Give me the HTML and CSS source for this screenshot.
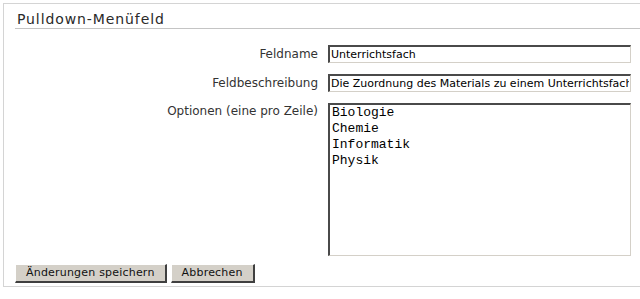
FILE: index.html
```html
<!DOCTYPE html>
<html lang="de">
<head>
  <meta charset="UTF-8" />
  <meta name="viewport" content="width=device-width, initial-scale=1.0" />
  <title>Pulldown-Menüfeld</title>
  <link rel="stylesheet" href="styles.css">
</head>
<body>
  <div class="panel">
    <h2>Pulldown-Menüfeld</h2>

    <form class="fields" onsubmit="return false">
      <label for="fname">Feldname</label>
      <input type="text" id="fname" value="Unterrichtsfach" />

      <label for="fdesc">Feldbeschreibung</label>
      <input type="text" id="fdesc" value="Die Zuordnung des Materials zu einem Unterrichtsfach" />

      <label for="fopts" class="top">Optionen (eine pro Zeile)</label>
      <textarea id="fopts">Biologie
Chemie
Informatik
Physik</textarea>
    </form>

    <div class="buttons">
      <button type="button">Änderungen speichern</button>
      <button type="button">Abbrechen</button>
    </div>
  </div>
</body>
</html>
```

FILE: styles.css
```css
body {
  font-family: "DejaVu Sans", Verdana, sans-serif;
  margin: 0;
  background: #fff;
  color: #333;
  overflow: hidden;
}

.panel {
  margin: 3px 0 0 3px;
  border: 1px solid #d4d4d4;
  border-right: none;
  padding-bottom: 3px;
}

h2 {
  font-size: 14px;
  font-weight: normal;
  letter-spacing: 0.9px;
  line-height: 18px;
  margin: 0 0 0 11px;
  padding: 6px 0 0 2px;
  border-bottom: 1px solid #c4c4c4;
  color: #2a2a2a;
}

.fields {
  display: grid;
  grid-template-columns: 303px 303px;
  column-gap: 10px;
  row-gap: 11px;
  margin: 16px 0 0 11px;
  align-items: center;
}

label {
  font-size: 12px;
  text-align: right;
  color: #333;
}

label.top {
  align-self: start;
  padding-top: 1px;
}

input[type="text"],
textarea {
  box-sizing: border-box;
  width: 303px;
  margin: 0;
  border-style: solid;
  border-width: 2px 1px 1px 2px;
  border-color: #4a4a4a #d4d0c8 #d4d0c8 #4a4a4a;
  background: #fff;
  color: #000;
  outline: none;
}

input[type="text"] {
  height: 18px;
  padding: 0 1px;
  font-family: "DejaVu Sans", Verdana, sans-serif;
  font-size: 11px;
}

textarea {
  height: 153px;
  padding: 0 2px;
  font-family: "Liberation Mono", "Courier New", monospace;
  font-size: 13px;
  line-height: 16px;
  resize: none;
  overflow: hidden;
}

.buttons {
  display: flex;
  gap: 4px;
  margin: 8px 0 0 11px;
}

button {
  font-family: "DejaVu Sans", Verdana, sans-serif;
  font-size: 11px;
  letter-spacing: 0.2px;
  line-height: 14px;
  color: #111;
  background: #d4d0c8;
  border-style: solid;
  border-width: 1px 2px 2px 1px;
  border-color: #fff #404040 #404040 #fff;
  padding: 1px 10px;
  cursor: pointer;
}
```
